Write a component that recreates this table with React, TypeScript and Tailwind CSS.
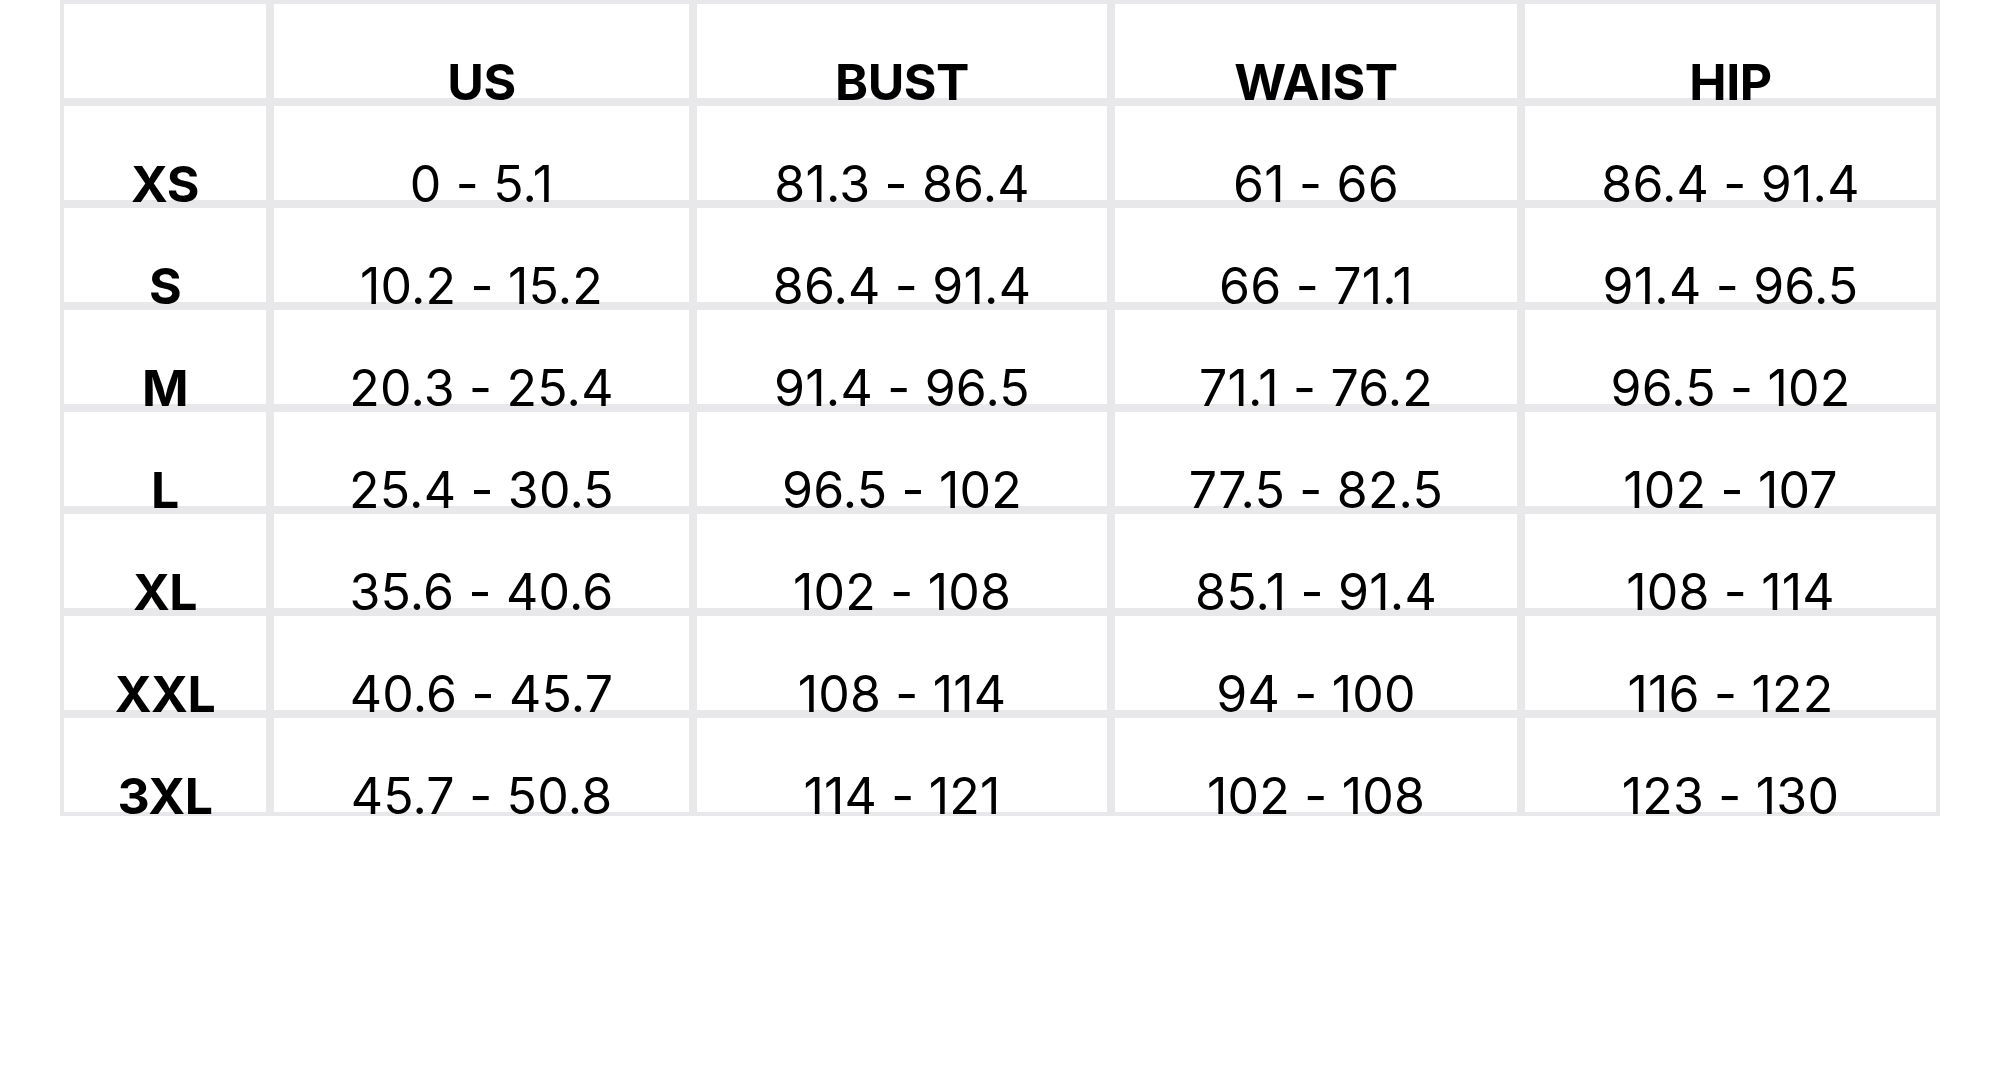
const headers = ['', 'US', 'BUST', 'WAIST', 'HIP'];

const rows: string[][] = [
  ['XS', '0 - 5.1', '81.3 - 86.4', '61 - 66', '86.4 - 91.4'],
  ['S', '10.2 - 15.2', '86.4 - 91.4', '66 - 71.1', '91.4 - 96.5'],
  ['M', '20.3 - 25.4', '91.4 - 96.5', '71.1 - 76.2', '96.5 - 102'],
  ['L', '25.4 - 30.5', '96.5 - 102', '77.5 - 82.5', '102 - 107'],
  ['XL', '35.6 - 40.6', '102 - 108', '85.1 - 91.4', '108 - 114'],
  ['XXL', '40.6 - 45.7', '108 - 114', '94 - 100', '116 - 122'],
  ['3XL', '45.7 - 50.8', '114 - 121', '102 - 108', '123 - 130'],
];

function Cell({ children, bold }: { children: React.ReactNode; bold?: boolean }) {
  return (
    <div className="flex h-[102px] items-end justify-center border-4 border-[#e8e8ea] bg-white">
      <span
        className={`-mb-[9px] whitespace-nowrap text-[50px] leading-[50px] text-black ${
          bold ? 'font-bold tracking-[-0.5px]' : 'font-normal tracking-[0.2px]'
        }`}
      >
        {children}
      </span>
    </div>
  );
}

export default function App() {
  return (
    <div className="min-h-screen w-full bg-white font-['Inter',sans-serif]">
      <div className="pl-[60px]">
        <div className="grid w-[1880px] grid-cols-[210px_423px_418px_410px_419px]">
          {headers.map((h, i) => (
            <Cell key={`h-${i}`} bold>
              {h}
            </Cell>
          ))}
          {rows.map((row) =>
            row.map((val, j) => (
              <Cell key={`${row[0]}-${j}`} bold={j === 0}>
                {val}
              </Cell>
            ))
          )}
        </div>
      </div>
    </div>
  );
}
